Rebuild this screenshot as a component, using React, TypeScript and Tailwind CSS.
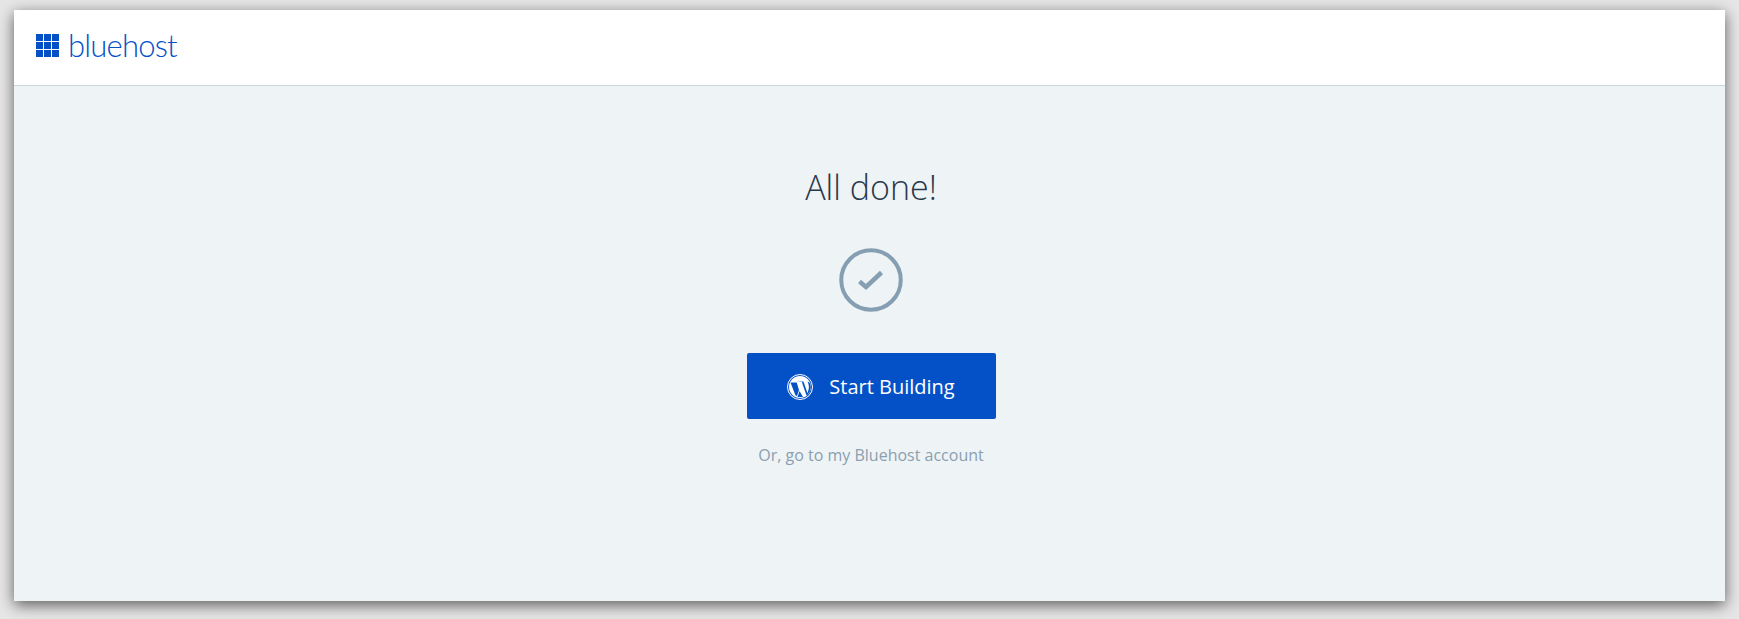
export default function App() {
  return (
    <div className="h-[619px] overflow-hidden bg-[#e6e6e6] pt-[10px] pb-[18px] px-[14px] font-['Open_Sans',sans-serif]">
      <div className="flex h-[591px] flex-col bg-[#eef3f6] shadow-[0_4px_14px_rgba(0,0,0,0.6)]">
        <header className="flex h-[76px] shrink-0 items-center gap-[9px] border-b border-[#c9d6de] bg-white pb-[4px] pl-[22px]">
          <div className="grid grid-cols-3 gap-[1px]">
            {Array.from({ length: 9 }).map((_, i) => (
              <div key={i} className="h-[7px] w-[7px] bg-[#0451c7]" />
            ))}
          </div>
          <span className="font-['Lato',sans-serif] text-[31px] font-light leading-none tracking-[-0.8px] text-[#0451c7]">bluehost</span>
        </header>
        <main className="flex flex-1 flex-col items-center pl-[3px]">
          <h1 className="mt-[78px] text-[34px] font-light leading-[46px] text-[#2a384b]">All done!</h1>
          <svg className="mt-[38px]" width="64" height="64" viewBox="0 0 64 64" fill="none">
            <circle cx="32" cy="32" r="29.75" stroke="#859eb1" strokeWidth="4" />
            <path d="M20.5 33.500l6.500 5.500L42.500 24.500" stroke="#859eb1" strokeWidth="4.500" />
          </svg>
          <button className="mt-[41px] flex h-[66px] w-[249px] items-center justify-center gap-[16px] rounded-[2px] bg-[#0451c7] pt-[2px] text-[20px] text-white">
            <svg width="26" height="26" viewBox="0 0 26 26">
              <circle cx="13" cy="13" r="12.5" fill="none" stroke="#fff" strokeWidth="1" />
              <circle cx="13" cy="13" r="11" fill="#fff" />
              <path d="M3.500 8.500l5 13 1.500.5 2-6-2.300-7.500zM9 7.500h7l-1 1 4.500 13 1.500-.8-4-11.700-1-2zM12.500 17l-2 6h5.500zM20.500 7.500c1.500 3 2 6 .5 10l-1.200 3.500c3-2 4-5 4-8s-1-4.500-3.300-5.500z" fill="#0451c7" />
            </svg>
            <span>Start Building</span>
          </button>
          <a className="mt-[25px] text-[16px] leading-[22px] text-[#8b9fb0]">Or, go to my Bluehost account</a>
        </main>
      </div>
    </div>
  );
}
